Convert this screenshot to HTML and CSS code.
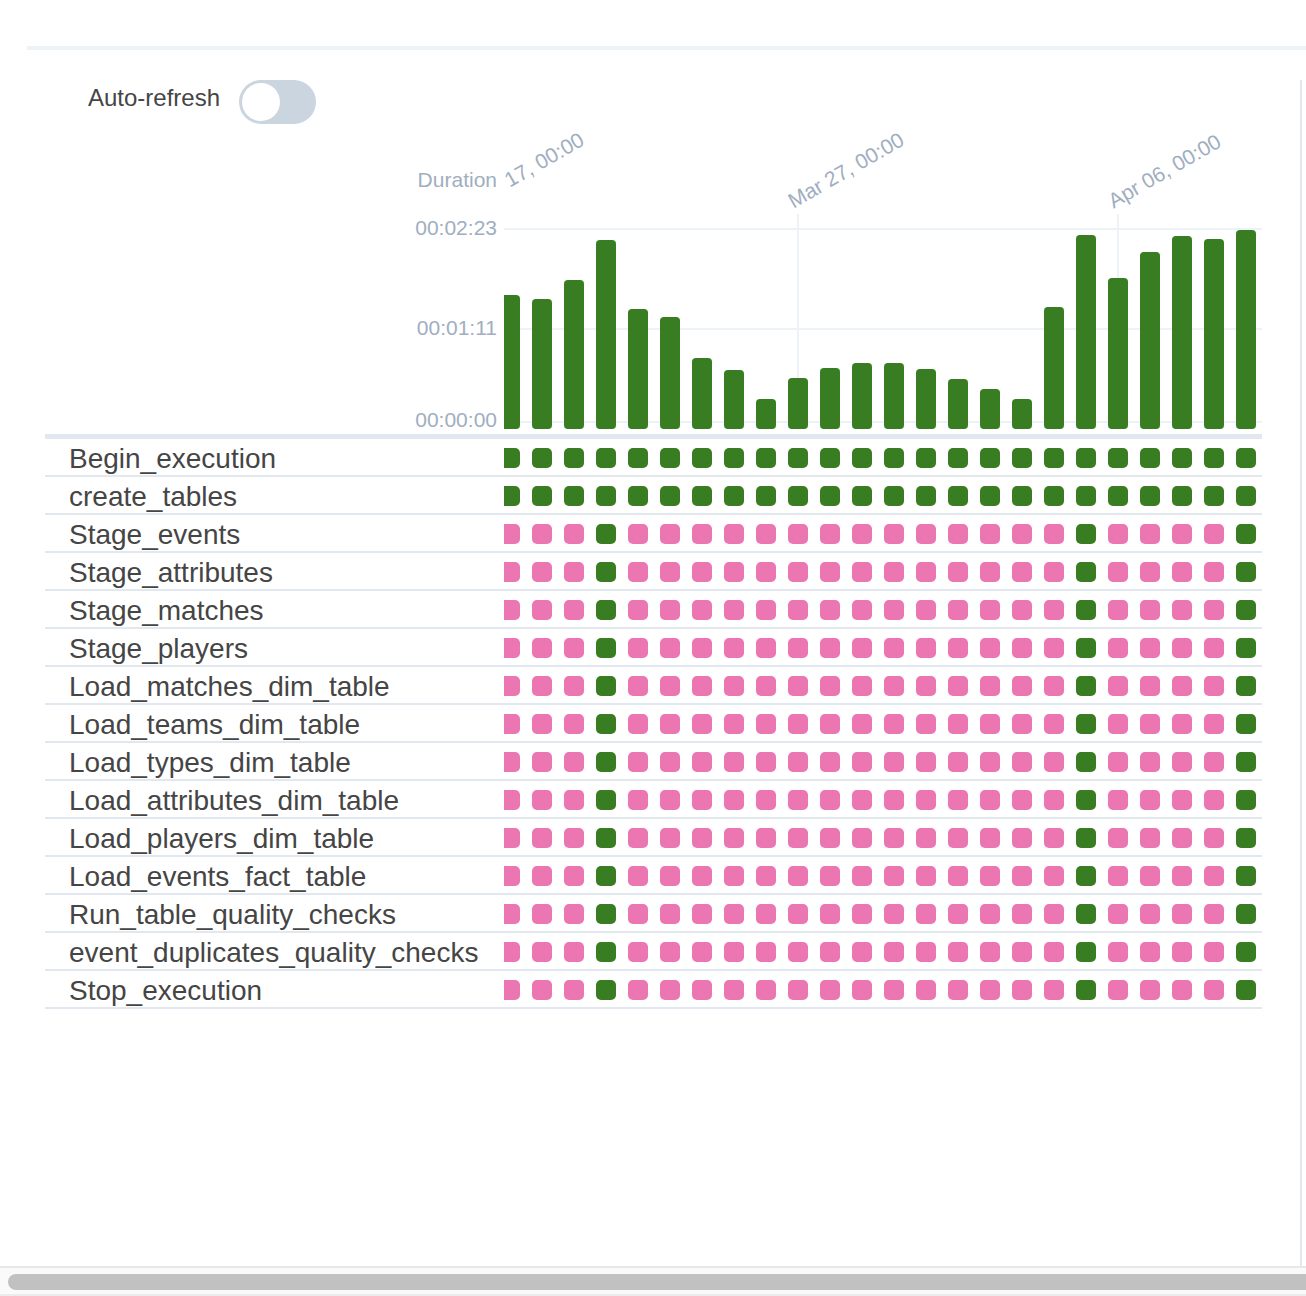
FILE: index.html
```html
<!DOCTYPE html>
<html lang="en">
<head>
<meta charset="utf-8">
<title>Grid</title>
<link rel="stylesheet" href="styles.css">
</head>
<body>
<div class="topline"></div>
<div class="main">
  <div class="controls">
    <span class="ctl-label">Auto-refresh</span>
    <span class="switch"><span class="knob"></span></span>
  </div>
  <div class="grid">
    <div class="chart">
      <div class="yaxis">
        <span class="ylab dur">Duration</span>
        <span class="ylab y1">00:02:23</span>
        <span class="ylab y2">00:01:11</span>
        <span class="ylab y3">00:00:00</span>
      </div>
      <div class="plot">
        <span class="xlab x0">Mar 17, 00:00</span>
        <span class="xlab x1">Mar 27, 00:00</span>
        <span class="xlab x2">Apr 06, 00:00</span>
        <div class="hline h1"></div>
        <div class="hline h2"></div>
        <div class="hline h3"></div>
        <div class="vline v1"></div>
        <div class="vline v2"></div>
        <div class="bars">
          <i style="height:134px"></i><i style="height:130px"></i><i style="height:149px"></i><i style="height:189px"></i><i style="height:120px"></i><i style="height:112px"></i><i style="height:71px"></i><i style="height:59px"></i><i style="height:30px"></i><i style="height:51px"></i><i style="height:61px"></i><i style="height:66px"></i><i style="height:66px"></i><i style="height:60px"></i><i style="height:50px"></i><i style="height:40px"></i><i style="height:30px"></i><i style="height:122px"></i><i style="height:194px"></i><i style="height:151px"></i><i style="height:177px"></i><i style="height:193px"></i><i style="height:190px"></i><i style="height:199px"></i>
        </div>
      </div>
    </div>
    <div class="sep"></div>

    <div class="row"><div class="name">Begin_execution</div><div class="cells"><div class="track">
      <i class="g"></i><i class="g"></i><i class="g"></i><i class="g"></i><i class="g"></i><i class="g"></i><i class="g"></i><i class="g"></i><i class="g"></i><i class="g"></i><i class="g"></i><i class="g"></i><i class="g"></i><i class="g"></i><i class="g"></i><i class="g"></i><i class="g"></i><i class="g"></i><i class="g"></i><i class="g"></i><i class="g"></i><i class="g"></i><i class="g"></i><i class="g"></i>
    </div></div></div>
    <div class="row"><div class="name">create_tables</div><div class="cells"><div class="track">
      <i class="g"></i><i class="g"></i><i class="g"></i><i class="g"></i><i class="g"></i><i class="g"></i><i class="g"></i><i class="g"></i><i class="g"></i><i class="g"></i><i class="g"></i><i class="g"></i><i class="g"></i><i class="g"></i><i class="g"></i><i class="g"></i><i class="g"></i><i class="g"></i><i class="g"></i><i class="g"></i><i class="g"></i><i class="g"></i><i class="g"></i><i class="g"></i>
    </div></div></div>
    <div class="row"><div class="name">Stage_events</div><div class="cells"><div class="track">
      <i class="p"></i><i class="p"></i><i class="p"></i><i class="g"></i><i class="p"></i><i class="p"></i><i class="p"></i><i class="p"></i><i class="p"></i><i class="p"></i><i class="p"></i><i class="p"></i><i class="p"></i><i class="p"></i><i class="p"></i><i class="p"></i><i class="p"></i><i class="p"></i><i class="g"></i><i class="p"></i><i class="p"></i><i class="p"></i><i class="p"></i><i class="g"></i>
    </div></div></div>
    <div class="row"><div class="name">Stage_attributes</div><div class="cells"><div class="track">
      <i class="p"></i><i class="p"></i><i class="p"></i><i class="g"></i><i class="p"></i><i class="p"></i><i class="p"></i><i class="p"></i><i class="p"></i><i class="p"></i><i class="p"></i><i class="p"></i><i class="p"></i><i class="p"></i><i class="p"></i><i class="p"></i><i class="p"></i><i class="p"></i><i class="g"></i><i class="p"></i><i class="p"></i><i class="p"></i><i class="p"></i><i class="g"></i>
    </div></div></div>
    <div class="row"><div class="name">Stage_matches</div><div class="cells"><div class="track">
      <i class="p"></i><i class="p"></i><i class="p"></i><i class="g"></i><i class="p"></i><i class="p"></i><i class="p"></i><i class="p"></i><i class="p"></i><i class="p"></i><i class="p"></i><i class="p"></i><i class="p"></i><i class="p"></i><i class="p"></i><i class="p"></i><i class="p"></i><i class="p"></i><i class="g"></i><i class="p"></i><i class="p"></i><i class="p"></i><i class="p"></i><i class="g"></i>
    </div></div></div>
    <div class="row"><div class="name">Stage_players</div><div class="cells"><div class="track">
      <i class="p"></i><i class="p"></i><i class="p"></i><i class="g"></i><i class="p"></i><i class="p"></i><i class="p"></i><i class="p"></i><i class="p"></i><i class="p"></i><i class="p"></i><i class="p"></i><i class="p"></i><i class="p"></i><i class="p"></i><i class="p"></i><i class="p"></i><i class="p"></i><i class="g"></i><i class="p"></i><i class="p"></i><i class="p"></i><i class="p"></i><i class="g"></i>
    </div></div></div>
    <div class="row"><div class="name">Load_matches_dim_table</div><div class="cells"><div class="track">
      <i class="p"></i><i class="p"></i><i class="p"></i><i class="g"></i><i class="p"></i><i class="p"></i><i class="p"></i><i class="p"></i><i class="p"></i><i class="p"></i><i class="p"></i><i class="p"></i><i class="p"></i><i class="p"></i><i class="p"></i><i class="p"></i><i class="p"></i><i class="p"></i><i class="g"></i><i class="p"></i><i class="p"></i><i class="p"></i><i class="p"></i><i class="g"></i>
    </div></div></div>
    <div class="row"><div class="name">Load_teams_dim_table</div><div class="cells"><div class="track">
      <i class="p"></i><i class="p"></i><i class="p"></i><i class="g"></i><i class="p"></i><i class="p"></i><i class="p"></i><i class="p"></i><i class="p"></i><i class="p"></i><i class="p"></i><i class="p"></i><i class="p"></i><i class="p"></i><i class="p"></i><i class="p"></i><i class="p"></i><i class="p"></i><i class="g"></i><i class="p"></i><i class="p"></i><i class="p"></i><i class="p"></i><i class="g"></i>
    </div></div></div>
    <div class="row"><div class="name">Load_types_dim_table</div><div class="cells"><div class="track">
      <i class="p"></i><i class="p"></i><i class="p"></i><i class="g"></i><i class="p"></i><i class="p"></i><i class="p"></i><i class="p"></i><i class="p"></i><i class="p"></i><i class="p"></i><i class="p"></i><i class="p"></i><i class="p"></i><i class="p"></i><i class="p"></i><i class="p"></i><i class="p"></i><i class="g"></i><i class="p"></i><i class="p"></i><i class="p"></i><i class="p"></i><i class="g"></i>
    </div></div></div>
    <div class="row"><div class="name">Load_attributes_dim_table</div><div class="cells"><div class="track">
      <i class="p"></i><i class="p"></i><i class="p"></i><i class="g"></i><i class="p"></i><i class="p"></i><i class="p"></i><i class="p"></i><i class="p"></i><i class="p"></i><i class="p"></i><i class="p"></i><i class="p"></i><i class="p"></i><i class="p"></i><i class="p"></i><i class="p"></i><i class="p"></i><i class="g"></i><i class="p"></i><i class="p"></i><i class="p"></i><i class="p"></i><i class="g"></i>
    </div></div></div>
    <div class="row"><div class="name">Load_players_dim_table</div><div class="cells"><div class="track">
      <i class="p"></i><i class="p"></i><i class="p"></i><i class="g"></i><i class="p"></i><i class="p"></i><i class="p"></i><i class="p"></i><i class="p"></i><i class="p"></i><i class="p"></i><i class="p"></i><i class="p"></i><i class="p"></i><i class="p"></i><i class="p"></i><i class="p"></i><i class="p"></i><i class="g"></i><i class="p"></i><i class="p"></i><i class="p"></i><i class="p"></i><i class="g"></i>
    </div></div></div>
    <div class="row"><div class="name">Load_events_fact_table</div><div class="cells"><div class="track">
      <i class="p"></i><i class="p"></i><i class="p"></i><i class="g"></i><i class="p"></i><i class="p"></i><i class="p"></i><i class="p"></i><i class="p"></i><i class="p"></i><i class="p"></i><i class="p"></i><i class="p"></i><i class="p"></i><i class="p"></i><i class="p"></i><i class="p"></i><i class="p"></i><i class="g"></i><i class="p"></i><i class="p"></i><i class="p"></i><i class="p"></i><i class="g"></i>
    </div></div></div>
    <div class="row"><div class="name">Run_table_quality_checks</div><div class="cells"><div class="track">
      <i class="p"></i><i class="p"></i><i class="p"></i><i class="g"></i><i class="p"></i><i class="p"></i><i class="p"></i><i class="p"></i><i class="p"></i><i class="p"></i><i class="p"></i><i class="p"></i><i class="p"></i><i class="p"></i><i class="p"></i><i class="p"></i><i class="p"></i><i class="p"></i><i class="g"></i><i class="p"></i><i class="p"></i><i class="p"></i><i class="p"></i><i class="g"></i>
    </div></div></div>
    <div class="row"><div class="name">event_duplicates_quality_checks</div><div class="cells"><div class="track">
      <i class="p"></i><i class="p"></i><i class="p"></i><i class="g"></i><i class="p"></i><i class="p"></i><i class="p"></i><i class="p"></i><i class="p"></i><i class="p"></i><i class="p"></i><i class="p"></i><i class="p"></i><i class="p"></i><i class="p"></i><i class="p"></i><i class="p"></i><i class="p"></i><i class="g"></i><i class="p"></i><i class="p"></i><i class="p"></i><i class="p"></i><i class="g"></i>
    </div></div></div>
    <div class="row"><div class="name">Stop_execution</div><div class="cells"><div class="track">
      <i class="p"></i><i class="p"></i><i class="p"></i><i class="g"></i><i class="p"></i><i class="p"></i><i class="p"></i><i class="p"></i><i class="p"></i><i class="p"></i><i class="p"></i><i class="p"></i><i class="p"></i><i class="p"></i><i class="p"></i><i class="p"></i><i class="p"></i><i class="p"></i><i class="g"></i><i class="p"></i><i class="p"></i><i class="p"></i><i class="p"></i><i class="g"></i>
    </div></div></div>
  </div>
</div>
<div class="hscroll"><div class="thumb"></div></div>
</body>
</html>
```
FILE: styles.css
```css
* { box-sizing: border-box; }
html, body { margin: 0; padding: 0; }
body {
  width: 1306px;
  height: 1296px;
  overflow: hidden;
  background: #ffffff;
  font-family: "Liberation Sans", Arial, sans-serif;
  color: #464646;
}

.topline {
  margin: 46px 0 0 27px;
  height: 4px;
  background: #edf2f7;
}

.main {
  margin-top: 30px;
  width: 1302px;
  height: 1186px;
  border-right: 2px solid #e2e8f0;
}

.controls {
  height: 44px;
  display: flex;
  align-items: center;
  gap: 19px;
  padding-left: 88px;
}
.ctl-label {
  font-size: 24px;
  line-height: 24px;
  color: #454545;
  margin-top: -8px;
}
.switch {
  width: 77px;
  height: 44px;
  border-radius: 22px;
  background: #cbd5e0;
  padding: 3px;
  display: flex;
  align-items: center;
}
.knob {
  width: 38px;
  height: 38px;
  border-radius: 50%;
  background: #ffffff;
}

.grid {
  margin-left: 45px;
  width: 1217px;
}

.chart {
  display: flex;
  height: 305px;
}
.yaxis {
  position: relative;
  width: 459px;
  flex: none;
}
.ylab {
  position: absolute;
  right: 7px;
  font-size: 21px;
  line-height: 21px;
  color: #a0aec0;
  white-space: nowrap;
}
.dur { top: 45px; }
.y1 { top: 93px; }
.y2 { top: 193px; }
.y3 { top: 285px; }

.plot {
  position: relative;
  flex: 1;
  overflow: hidden;
}
.xlab {
  position: absolute;
  top: 67px;
  font-size: 21px;
  line-height: 21px;
  color: #a0aec0;
  white-space: nowrap;
  transform-origin: 0 17px;
  transform: rotate(-30deg);
}
.x0 { left: -31px; }
.x1 { left: 289px; }
.x2 { left: 609px; }

.hline {
  position: absolute;
  left: 0;
  right: 0;
  height: 2px;
  background: #edf2f7;
}
.h1 { top: 104px; }
.h2 { top: 204px; }
.h3 { top: 297px; }
.vline {
  position: absolute;
  top: 90px;
  bottom: 0;
  width: 2px;
  background: #edf2f7;
}
.v1 { left: 293px; }
.v2 { left: 613px; }

.bars {
  position: absolute;
  left: -4px;
  bottom: 0;
  display: flex;
  align-items: flex-end;
  gap: 12px;
}
.bars i {
  display: block;
  width: 20px;
  background: #387d22;
  border-radius: 4px;
}

.sep {
  margin-top: 5px;
  height: 5px;
  background: #e2e8f0;
}

.row {
  display: flex;
  align-items: center;
  height: 38px;
  border-bottom: 2px solid #e2e8f0;
}
.name {
  width: 459px;
  flex: none;
  padding-left: 24px;
  padding-top: 3px;
  font-size: 28px;
  line-height: 28px;
  color: #454545;
  white-space: nowrap;
}
.cells {
  flex: 1;
  overflow: hidden;
  padding-top: 1px;
}
.track {
  display: flex;
  gap: 12px;
  margin-left: -4px;
}
.track i {
  display: block;
  flex: none;
  width: 20px;
  height: 20px;
  border-radius: 5px;
}
.track i.g { background: #387d22; }
.track i.p { background: #ec76b2; }

.hscroll {
  height: 30px;
  background: #fafafa;
  border-top: 2px solid #e8e8e8;
  border-bottom: 2px solid #ececec;
  padding: 6px 0 0 8px;
  overflow: hidden;
}
.thumb {
  width: 1320px;
  height: 16px;
  border-radius: 8px;
  background: #c1c1c1;
}
```
